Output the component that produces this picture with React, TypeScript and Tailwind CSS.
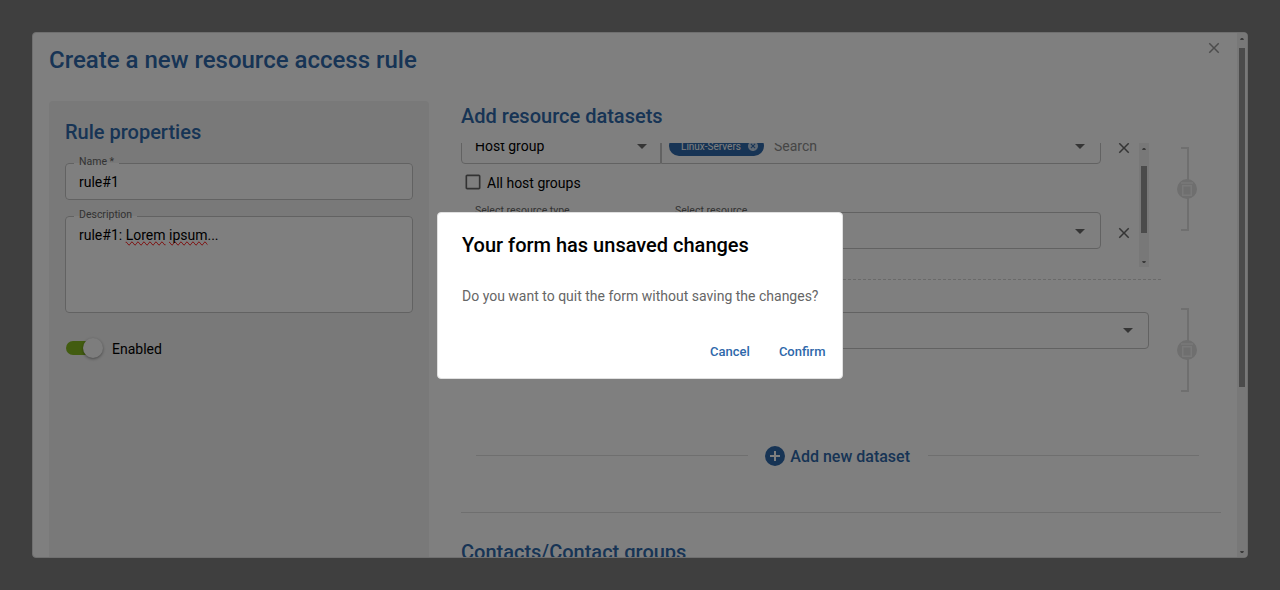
import type { ReactNode } from "react";

function CloseIcon({ className = "" }: { className?: string }) {
  return (
    <svg viewBox="0 0 24 24" className={`size-[18px] shrink-0 fill-current ${className}`}>
      <path d="M19 6.41 17.59 5 12 10.59 6.41 5 5 6.41 10.59 12 5 17.59 6.41 19 12 13.41 17.59 19 19 17.59 13.41 12z" />
    </svg>
  );
}

function DropDownIcon({ className = "" }: { className?: string }) {
  return (
    <svg viewBox="0 0 24 24" className={`size-6 shrink-0 fill-[#6a6a6a] ${className}`}>
      <path d="m7 10 5 5 5-5z" />
    </svg>
  );
}

function Field({
  label,
  className,
  outline = "rounded",
  children,
}: {
  label?: string;
  className: string;
  outline?: string;
  children?: ReactNode;
}) {
  return (
    <div className={`relative flex bg-white text-sm text-black ${outline} ${className}`}>
      {children}
      <fieldset
        className={`pointer-events-none absolute inset-x-0 bottom-0 border border-[#c4c4c4] px-2 ${outline} ${
          label ? "-top-2" : "top-0"
        }`}
      >
        {label && (
          <legend className="h-[17px] px-[5px] text-[10.5px] leading-[13px] text-[#666]">{label}</legend>
        )}
      </fieldset>
    </div>
  );
}

function Scrollbar({ className = "", thumb }: { className?: string; thumb: string }) {
  return (
    <div className={`flex w-[10px] shrink-0 flex-col items-center justify-between bg-[#f1f1f1] ${className}`}>
      <div className="flex flex-col items-center">
        <svg viewBox="0 0 4 2" className="mt-[5px] h-[2px] w-1 fill-[#777]">
          <path d="M1 0h2l1 2H0z" />
        </svg>
        <div className={`w-1.5 bg-[#979797] ${thumb}`} />
      </div>
      <svg viewBox="0 0 4 2" className="mb-1 h-[2px] w-1 fill-[#777]">
        <path d="M0 0h4L3 2H1z" />
      </svg>
    </div>
  );
}

function DeleteBracket({ className = "" }: { className?: string }) {
  return (
    <svg viewBox="0 0 20 84" className={`h-[84px] w-5 shrink-0 ${className}`}>
      <path d="M4 1h7v82H4" fill="none" stroke="#dedede" strokeWidth="2" />
      <circle cx="10" cy="42" r="10" fill="#dedede" />
      <path d="M4 36h12" stroke="#f2f2f2" strokeWidth="1.5" />
      <path d="M5.75 38.75h8.5v9.5h-8.5z" fill="none" stroke="#f2f2f2" strokeWidth="1.5" />
    </svg>
  );
}

function ResourceRow({
  children,
  value = "",
  labelled = false,
}: {
  children?: ReactNode;
  value?: string;
  labelled?: boolean;
}) {
  return (
    <div className="flex h-[37px] shrink-0">
      <Field
        label={labelled ? "Select resource type" : undefined}
        className="w-[200px] items-center pr-[7px] pl-[14px]"
        outline="rounded-l"
      >
        <span className="flex-1">{value}</span>
        <DropDownIcon />
      </Field>
      <Field
        label={labelled ? "Select resource" : undefined}
        className="w-[440px] items-center pr-[9px] pl-2"
        outline="rounded-r"
      >
        <div className="flex flex-1 items-center">{children}</div>
        <DropDownIcon />
      </Field>
      <CloseIcon className="mt-3 ml-[14px] text-[#6a6a6a]" />
    </div>
  );
}

function RuleProperties() {
  return (
    <section className="flex h-[600px] w-[380px] shrink-0 flex-col rounded bg-[#f2f2f2] p-4">
      <h2 className="text-xl leading-[30px] font-medium text-[#2e68aa]">Rule properties</h2>
      <Field label="Name *" className="mt-4 h-[37px] items-center px-[14px]">
        rule#1
      </Field>
      <Field label="Description" className="mt-4 h-[97px] px-[14px] pt-[9px] leading-5">
        <p>
          rule#1: <span className="[text-decoration-line:spelling-error]">Lorem</span>{" "}
          <span className="[text-decoration-line:spelling-error]">ipsum</span>...
        </p>
      </Field>
      <div className="mt-[26px] flex items-center">
        <div className="ml-px flex h-[14px] w-[34px] items-center justify-end rounded-full bg-[#84b920]">
          <div className="-mr-[3px] size-5 shrink-0 rounded-full bg-[#fafafa] shadow-[0_1px_3px_rgba(0,0,0,0.4)]" />
        </div>
        <span className="-mb-0.5 ml-3 text-sm">Enabled</span>
      </div>
    </section>
  );
}

function Datasets() {
  return (
    <section className="flex w-[760px] flex-col">
      <h2 className="text-xl leading-[30px] font-medium text-[#2e68aa]">Add resource datasets</h2>
      <div className="mt-3 flex h-[124px]">
        <div className="flex w-[678px] flex-col overflow-hidden">
          <div className="-mt-4 flex flex-col">
            <ResourceRow value="Host group">
              <span className="flex h-5 w-[95px] items-center rounded-full bg-[#2e68aa] pl-3 text-[10px] leading-4 text-white">
                <span className="pt-0.5">Linux-Servers</span>
                <svg viewBox="0 0 24 24" className="ml-1.5 size-3 fill-white/70">
                  <path d="M12 2C6.47 2 2 6.47 2 12s4.47 10 10 10 10-4.47 10-10S17.53 2 12 2m5 13.59L15.59 17 12 13.41 8.41 17 7 15.59 10.59 12 7 8.41 8.41 7 12 10.59 15.59 7 17 8.41 13.41 12z" />
                </svg>
              </span>
              <span className="ml-[10px] text-[#8c8c8c]">Search</span>
            </ResourceRow>
            <div className="mt-[9px] flex h-5 items-center">
              <svg viewBox="0 0 24 24" className="-mt-0.5 ml-[2px] size-5 fill-[#666]">
                <path d="M19 5v14H5V5zm0-2H5c-1.1 0-2 .9-2 2v14c0 1.1.9 2 2 2h14c1.1 0 2-.9 2-2V5c0-1.1-.9-2-2-2" />
              </svg>
              <span className="ml-1 text-sm">All host groups</span>
            </div>
            <div className="mt-[19px] flex">
              <ResourceRow labelled />
            </div>
          </div>
        </div>
        <Scrollbar thumb="mt-4 h-[67px]" />
        <DeleteBracket className="mt-1 ml-7" />
      </div>
      <div className="mt-3 h-px w-[700px] bg-[repeating-linear-gradient(90deg,transparent_0_2px,#d4d4d4_2px_5px)]" />
      <div className="mt-7 flex h-[89px]">
        <Field label="Select resource type" className="mt-1 h-[37px] w-[688px] items-center justify-end pr-[9px]">
          <DropDownIcon className="mb-px" />
        </Field>
        <DeleteBracket className="ml-7" />
      </div>
      <div className="mt-[44px] flex h-[30px] items-center pl-[15px]">
        <div className="mr-[17px] mb-px h-px flex-1 bg-[#dedede]" />
        <svg viewBox="0 0 20 20" className="size-5">
          <circle cx="10" cy="10" r="10" fill="#2e68aa" />
          <path d="M10 5v10M5 10h10" stroke="#fff" strokeWidth="2" />
        </svg>
        <span className="-mb-0.5 ml-[5px] text-base font-medium text-[#2e68aa]">Add new dataset</span>
        <div className="mr-[22px] mb-px ml-[18px] h-px w-[271px] bg-[#dedede]" />
      </div>
      <div className="mt-[41px] h-px bg-[#dedede]" />
      <h2 className="mt-6 text-xl leading-[30px] font-medium text-[#2e68aa]">Contacts/Contact groups</h2>
    </section>
  );
}

function RuleModal() {
  return (
    <div className="flex h-[526px] w-[1216px] overflow-hidden rounded border border-[#dedede] bg-white">
      <div className="flex w-[1204px] flex-col pt-[11px] pl-4">
        <div className="flex h-[57px] shrink-0 items-start justify-between">
          <h1 className="text-2xl leading-8 font-medium text-[#2e68aa]">Create a new resource access rule</h1>
          <CloseIcon className="-mt-[5px] mr-[14px] text-[#999]" />
        </div>
        <div className="flex gap-8">
          <RuleProperties />
          <Datasets />
        </div>
      </div>
      <Scrollbar thumb="mt-2 h-[339px]" />
    </div>
  );
}

function ConfirmDialog() {
  return (
    <div className="flex h-[167px] w-[406px] flex-col rounded border border-[#e0e0e0] bg-white pt-4 pl-6">
      <h2 className="text-xl leading-8 font-medium text-black">Your form has unsaved changes</h2>
      <p className="mt-[25px] text-sm text-[#666]">Do you want to quit the form without saving the changes?</p>
      <div className="mt-9 flex justify-end gap-[29px] pr-[16.5px] text-[13px] leading-5 font-medium text-[#2e68aa]">
        <button>Cancel</button>
        <button>Confirm</button>
      </div>
    </div>
  );
}

export default function App() {
  return (
    <main className="h-[590px] w-[1280px] overflow-hidden bg-[#7f7f7f] p-8 font-['Roboto',sans-serif] text-black">
      <RuleModal />
      <div className="fixed inset-0 flex items-center justify-center bg-black/50">
        <ConfirmDialog />
      </div>
    </main>
  );
}
